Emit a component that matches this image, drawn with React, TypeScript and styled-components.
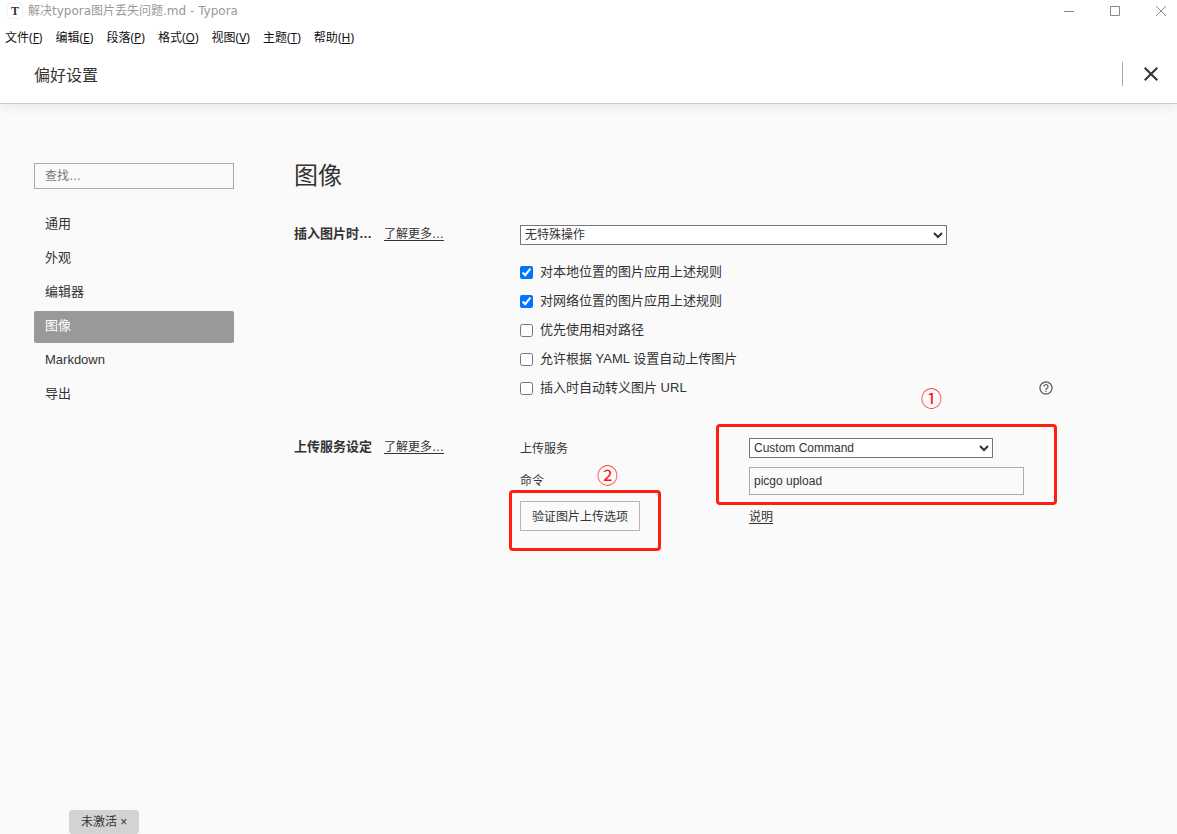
import React from "react";
import styled, { createGlobalStyle, css } from "styled-components";

const sans = `"Liberation Sans", "Noto Sans CJK SC", sans-serif`;
const system = `"Noto Sans", "Noto Sans CJK SC", sans-serif`;
const caption = `"DejaVu Sans", "Noto Sans CJK SC", sans-serif`;

const GlobalStyle = createGlobalStyle`
  *, *::before, *::after { box-sizing: border-box; }
  body {
    margin: 0;
    background: #fafafa;
    color: #333;
    font-family: ${sans};
    font-size: 13px;
    line-height: 20px;
  }
  button, input, select { font-family: inherit; color: inherit; }
`;

const Page = styled.div`
  display: flex;
  flex-direction: column;
  min-height: 100vh;
`;

const TopArea = styled.div`
  background: #fff;
  border-bottom: 1px solid #ccc;
  box-shadow: 0 2px 12px rgba(0, 0, 0, 0.08);
`;

const TitleBar = styled.div`
  display: flex;
  align-items: center;
  height: 22px;
  padding-left: 8px;
  font-family: ${caption};
  font-size: 12px;
  color: #999;
`;

const Logo = styled.span`
  width: 14px;
  height: 14px;
  margin-right: 6px;
  border-radius: 3px;
  background: #fff;
  box-shadow: 0 0 2px rgba(0, 0, 0, 0.2);
  color: #333;
  font: bold 12px/14px "Liberation Serif", serif;
  text-align: center;
`;

const WindowTitle = styled.span`
  flex: 1;
`;

const WindowButtons = styled.div`
  display: flex;
  gap: 14px;
`;

const IconButton = styled.button<{ $height: number }>`
  display: flex;
  align-items: center;
  justify-content: center;
  width: 32px;
  height: ${(p) => p.$height}px;
  padding: 0;
  border: 0;
  background: none;
`;

const MenuBar = styled.nav`
  display: flex;
  align-items: center;
  gap: 13px;
  height: 32px;
  padding-left: 5px;
`;

const MenuButton = styled.button`
  padding: 0;
  border: 0;
  background: none;
  font-family: ${system};
  font-size: 12px;
  line-height: 20px;
  color: #111;
`;

const Header = styled.header`
  display: flex;
  align-items: center;
  height: 49px;
  padding: 0 10px 10px 34px;
`;

const HeaderTitle = styled.h1`
  flex: 1;
  margin: 0;
  padding-top: 4px;
  font-size: 16px;
  font-weight: normal;
  line-height: 24px;
`;

const HeaderActions = styled.div`
  padding-left: 12px;
  border-left: 1px solid #aaa;
`;

const Body = styled.div`
  display: flex;
  gap: 60px;
  padding: 59px 120px 59px 34px;
`;

const Sidebar = styled.aside`
  flex: 0 0 200px;
`;

const SearchInput = styled.input`
  display: block;
  width: 100%;
  height: 26px;
  margin-bottom: 20px;
  padding: 0 10px;
  border: 1px solid #aaa;
  border-radius: 0;
  background: transparent;
  font-size: 12px;
  &::placeholder { color: #777; }
`;

const NavList = styled.ul`
  display: flex;
  flex-direction: column;
  gap: 2px;
  margin: 0;
  padding: 0;
  list-style: none;
`;

const NavLink = styled.a<{ $active: boolean }>`
  display: block;
  padding: 5px 11px 7px;
  border-radius: 2px;
  color: #333;
  text-decoration: none;
  ${(p) => p.$active && css`
    background: #999;
    color: #fff;
  `}
`;

const Main = styled.main`
  flex: 1;
  min-width: 0;
`;

const PageTitle = styled.h2`
  margin: 0 0 36px;
  font-size: 24px;
  font-weight: normal;
  line-height: 26px;
`;

const Section = styled.section`
  display: grid;
  grid-template-columns: 226px minmax(0, 1fr);
  margin-bottom: 40px;
`;

const SectionHead = styled.div`
  display: flex;
  align-items: baseline;
  align-self: start;
  gap: 12px;
`;

const SectionTitle = styled.h3`
  margin: 0;
  font-size: 13px;
  line-height: 18px;
`;

const TextLink = styled.a`
  color: #333;
  font-size: 12px;
  line-height: 18px;
  text-decoration: underline;
  text-underline-offset: 2px;
`;

const Select = styled.select<{ $width: string }>`
  display: block;
  width: ${(p) => p.$width};
  height: 20px;
  padding: 0;
  border: 1px solid #767676;
  border-radius: 0;
  background-color: #fff;
  font-size: 12px;
`;

const CheckList = styled.div`
  display: flex;
  flex-direction: column;
  gap: 9px;
  padding-top: 17px;
`;

const CheckRow = styled.div`
  display: flex;
  align-items: center;
  justify-content: space-between;
  padding-right: 3px;
`;

const CheckLabel = styled.label`
  display: flex;
  align-items: center;
  gap: 7px;
`;

const Checkbox = styled.input`
  width: 13px;
  height: 13px;
  margin: 0;
`;

const UploadGrid = styled.div`
  display: grid;
  grid-template-columns: 229px minmax(0, 1fr);
`;

const UploadColumn = styled.div`
  display: flex;
  flex-direction: column;
  align-items: flex-start;
`;

const FieldLabels = styled.div`
  display: flex;
  flex-direction: column;
  gap: 12px;
  padding: 1px 0 10px;
`;

const Controls = styled.div`
  position: relative;
  display: flex;
  flex-direction: column;
  gap: 9px;
  width: 275px;
`;

const FieldLabel = styled.label`
  font-size: 12px;
  line-height: 20px;
`;

const CommandInput = styled.input`
  width: 100%;
  height: 28px;
  padding: 0 4px;
  border: 1px solid #aaa;
  border-radius: 0;
  background: transparent;
  font-size: 12px;
`;

const HelpText = styled.div`
  padding-top: 12px;
`;

const ButtonWrap = styled.div`
  position: relative;
`;

const VerifyButton = styled.button`
  display: block;
  height: 30px;
  padding: 0 11px 2px;
  border: 1px solid #b5b5b5;
  background: transparent;
  font-size: 12px;
`;

const Highlight = styled.div<{ $inset: string }>`
  position: absolute;
  inset: ${(p) => p.$inset};
  border: 3px solid #ff1e10;
  border-radius: 4px;
  pointer-events: none;
`;

const StepMark = styled.span<{ $left: number; $top: number }>`
  position: absolute;
  left: ${(p) => p.$left}px;
  top: ${(p) => p.$top}px;
  color: #ff1010;
  font: 21px/24px "Noto Sans CJK SC", sans-serif;
`;

const LicenseBadge = styled.button`
  position: fixed;
  left: 69px;
  bottom: 0;
  height: 24px;
  padding: 0 12px 3px;
  border: 0;
  border-radius: 4px;
  background: #d3d3d3;
  font-size: 12px;
  white-space: nowrap;
`;

const menus = [
  ["文件", "F"],
  ["编辑", "E"],
  ["段落", "P"],
  ["格式", "O"],
  ["视图", "V"],
  ["主题", "T"],
  ["帮助", "H"],
];

const pages = ["通用", "外观", "编辑器", "图像", "Markdown", "导出"];

const rules = [
  { text: "对本地位置的图片应用上述规则", checked: true },
  { text: "对网络位置的图片应用上述规则", checked: true },
  { text: "优先使用相对路径", checked: false },
  { text: "允许根据 YAML 设置自动上传图片", checked: false },
  { text: "插入时自动转义图片 URL", checked: false, help: true },
];

const HelpIcon = () => (
  <svg width="16" height="16" viewBox="0 0 24 24" fill="#666" role="img" aria-label="帮助">
    <path d="M11 18h2v-2h-2v2zm1-16C6.48 2 2 6.48 2 12s4.480 10 10 10 10-4.480 10-10S17.520 2 12 2zm0 18c-4.410 0-8-3.590-8-8s3.590-8 8-8 8 3.590 8 8-3.590 8-8 8zm0-14c-2.210 0-4 1.790-4 4h2c0-1.100.9-2 2-2s2 .9 2 2c0 2-3 1.750-3 5h2c0-2.250 3-2.500 3-5 0-2.210-1.790-4-4-4z" />
  </svg>
);

export default function App() {
  return (
    <Page>
      <GlobalStyle />
      <TopArea>
        <TitleBar>
          <Logo>T</Logo>
          <WindowTitle>解决typora图片丢失问题.md - Typora</WindowTitle>
          <WindowButtons>
            <IconButton $height={22} aria-label="最小化">
              <svg width="10" height="10" stroke="#888" fill="none"><path d="M0 5.500h10" /></svg>
            </IconButton>
            <IconButton $height={22} aria-label="最大化">
              <svg width="10" height="10" stroke="#888" fill="none"><path d="M.5.5h9v9h-9z" /></svg>
            </IconButton>
            <IconButton $height={22} aria-label="关闭窗口">
              <svg width="10" height="10" stroke="#888" fill="none"><path d="M0 0l10 10M10 0L0 10" /></svg>
            </IconButton>
          </WindowButtons>
        </TitleBar>
        <MenuBar>
          {menus.map(([name, key]) => (
            <MenuButton key={key}>{name}(<u>{key}</u>)</MenuButton>
          ))}
        </MenuBar>
        <Header>
          <HeaderTitle>偏好设置</HeaderTitle>
          <HeaderActions>
            <IconButton $height={24} aria-label="关闭">
              <svg width="14" height="14" stroke="#333" strokeWidth="2" fill="none"><path d="M.7.7l12.600 12.600M13.300.7L.7 13.300" /></svg>
            </IconButton>
          </HeaderActions>
        </Header>
      </TopArea>
      <Body>
        <Sidebar>
          <SearchInput type="search" placeholder="查找…" aria-label="查找" />
          <NavList>
            {pages.map((name) => (
              <li key={name}>
                <NavLink href="#" $active={name === "图像"}>{name}</NavLink>
              </li>
            ))}
          </NavList>
        </Sidebar>
        <Main>
          <PageTitle>图像</PageTitle>
          <Section>
            <SectionHead>
              <SectionTitle>插入图片时…</SectionTitle>
              <TextLink href="#">了解更多…</TextLink>
            </SectionHead>
            <div>
              <Select $width="calc(100% - 110px)" aria-label="插入图片时">
                <option>无特殊操作</option>
              </Select>
              <CheckList>
                {rules.map((rule) => (
                  <CheckRow key={rule.text}>
                    <CheckLabel>
                      <Checkbox type="checkbox" defaultChecked={rule.checked} />
                      {rule.text}
                    </CheckLabel>
                    {rule.help && <HelpIcon />}
                  </CheckRow>
                ))}
              </CheckList>
            </div>
          </Section>
          <Section>
            <SectionHead>
              <SectionTitle>上传服务设定</SectionTitle>
              <TextLink href="#">了解更多…</TextLink>
            </SectionHead>
            <UploadGrid>
              <UploadColumn>
                <FieldLabels>
                  <FieldLabel htmlFor="service">上传服务</FieldLabel>
                  <FieldLabel htmlFor="command">命令</FieldLabel>
                </FieldLabels>
                <ButtonWrap>
                  <VerifyButton>验证图片上传选项</VerifyButton>
                  <Highlight $inset="-11px -21px -20px -11px" />
                  <StepMark $left={77} $top={-39}>②</StepMark>
                </ButtonWrap>
              </UploadColumn>
              <UploadColumn>
                <Controls>
                  <Select id="service" $width="244px">
                    <option>Custom Command</option>
                  </Select>
                  <CommandInput id="command" type="text" defaultValue="picgo upload" />
                  <Highlight $inset="-14px -33px -10px -33px" />
                  <StepMark $left={172} $top={-53}>①</StepMark>
                </Controls>
                <HelpText><TextLink href="#">说明</TextLink></HelpText>
              </UploadColumn>
            </UploadGrid>
          </Section>
        </Main>
      </Body>
      <LicenseBadge>未激活 ×</LicenseBadge>
    </Page>
  );
}
